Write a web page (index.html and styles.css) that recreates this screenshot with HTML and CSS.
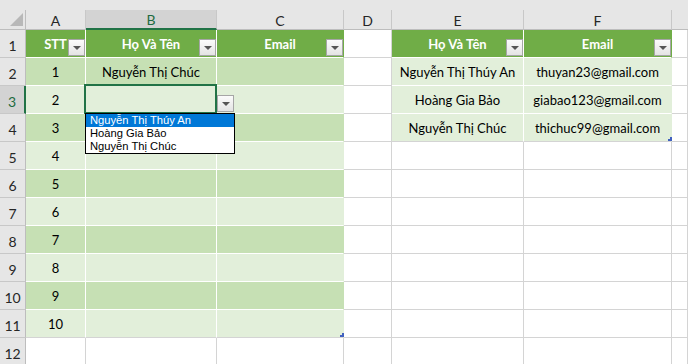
FILE: index.html
```html
<!DOCTYPE html>
<html>
<head>
	<meta charset="UTF-8">
	<title>Danh sách</title>
	<link rel="stylesheet" href="styles.css">
</head>
<body>
	<div class="sheet">
		<div class="strip"></div>

		<div class="ch corner"><span class="select-all"></span></div>
		<div class="ch">A</div>
		<div class="ch active">B</div>
		<div class="ch">C</div>
		<div class="ch">D</div>
		<div class="ch">E</div>
		<div class="ch">F</div>
		<div class="ch last"></div>

		<div class="rh">1</div>
		<div class="cell hd">STT<span class="filter"></span></div>
		<div class="cell hd">Họ Và Tên<span class="filter"></span></div>
		<div class="cell hd end">Email<span class="filter"></span></div>
		<div class="cell"></div>
		<div class="cell hd">Họ Và Tên<span class="filter"></span></div>
		<div class="cell hd end">Email<span class="filter"></span></div>
		<div class="cell"></div>

		<div class="rh">2</div>
		<div class="cell dk">1</div>
		<div class="cell dk">Nguyễn Thị Chúc</div>
		<div class="cell dk end"></div>
		<div class="cell"></div>
		<div class="cell lt">Nguyễn Thị Thúy An</div>
		<div class="cell lt end">thuyan23@gmail.com</div>
		<div class="cell"></div>

		<div class="rh active">3</div>
		<div class="cell lt">2</div>
		<div class="cell lt selected">
			<span class="sel-box"></span>
			<span class="drop-btn"></span>
			<ul class="drop-list">
				<li class="hover">Nguyễn Thị Thúy An</li>
				<li>Hoàng Gia Bảo</li>
				<li>Nguyễn Thị Chúc</li>
			</ul>
		</div>
		<div class="cell lt end"></div>
		<div class="cell"></div>
		<div class="cell lt">Hoàng Gia Bảo</div>
		<div class="cell lt end">giabao123@gmail.com</div>
		<div class="cell"></div>

		<div class="rh">4</div>
		<div class="cell dk">3</div>
		<div class="cell dk"></div>
		<div class="cell dk end"></div>
		<div class="cell"></div>
		<div class="cell lt bottom">Nguyễn Thị Chúc</div>
		<div class="cell lt end bottom">thichuc99@gmail.com<span class="resize"></span></div>
		<div class="cell"></div>

		<div class="rh">5</div>
		<div class="cell lt">4</div>
		<div class="cell lt"></div>
		<div class="cell lt end"></div>
		<div class="cell"></div>
		<div class="cell"></div>
		<div class="cell"></div>
		<div class="cell"></div>

		<div class="rh">6</div>
		<div class="cell dk">5</div>
		<div class="cell dk"></div>
		<div class="cell dk end"></div>
		<div class="cell"></div>
		<div class="cell"></div>
		<div class="cell"></div>
		<div class="cell"></div>

		<div class="rh">7</div>
		<div class="cell lt">6</div>
		<div class="cell lt"></div>
		<div class="cell lt end"></div>
		<div class="cell"></div>
		<div class="cell"></div>
		<div class="cell"></div>
		<div class="cell"></div>

		<div class="rh">8</div>
		<div class="cell dk">7</div>
		<div class="cell dk"></div>
		<div class="cell dk end"></div>
		<div class="cell"></div>
		<div class="cell"></div>
		<div class="cell"></div>
		<div class="cell"></div>

		<div class="rh">9</div>
		<div class="cell lt">8</div>
		<div class="cell lt"></div>
		<div class="cell lt end"></div>
		<div class="cell"></div>
		<div class="cell"></div>
		<div class="cell"></div>
		<div class="cell"></div>

		<div class="rh">10</div>
		<div class="cell dk">9</div>
		<div class="cell dk"></div>
		<div class="cell dk end"></div>
		<div class="cell"></div>
		<div class="cell"></div>
		<div class="cell"></div>
		<div class="cell"></div>

		<div class="rh">11</div>
		<div class="cell lt bottom">10</div>
		<div class="cell lt bottom"></div>
		<div class="cell lt end bottom"><span class="resize"></span></div>
		<div class="cell"></div>
		<div class="cell"></div>
		<div class="cell"></div>
		<div class="cell"></div>

		<div class="rh">12</div>
		<div class="cell"></div>
		<div class="cell"></div>
		<div class="cell"></div>
		<div class="cell"></div>
		<div class="cell"></div>
		<div class="cell"></div>
		<div class="cell"></div>
	</div>
</body>
</html>
```
FILE: styles.css
```css
body {
	margin: 0;
	padding: 0;
	background: #fff;
	font-family: Lato, "Liberation Sans", sans-serif;
	overflow: hidden;
}
.sheet {
	display: grid;
	grid-template-columns: 26px 60px 131px 127px 48px 132px 148px 1fr;
	grid-template-rows: 10px 20px repeat(12, 28px);
	width: 688px;
	font-size: 13px;
	color: #000;
}
.strip {
	grid-column: 1 / -1;
	background: #e6e6e6;
}
.ch {
	display: flex;
	align-items: center;
	justify-content: center;
	background: #e6e6e6;
	border-right: 1px solid #c8c8c8;
	border-bottom: 1px solid #bdbdbd;
	box-sizing: border-box;
	color: #262626;
	font-size: 14px;
	padding-top: 1px;
}
.ch.last {
	border-right: none;
}
.ch.active {
	background: #d3d3d3;
	color: #1e6b41;
	border-bottom: 2px solid #217346;
}
.corner {
	position: relative;
	border-right: 1px solid #bdbdbd;
}
.select-all {
	position: absolute;
	left: 10px;
	top: 3px;
	width: 0;
	height: 0;
	border-left: 13px solid transparent;
	border-bottom: 13px solid #b8b8b8;
}
.rh {
	display: flex;
	align-items: flex-end;
	justify-content: center;
	padding-bottom: 3px;
	background: #e6e6e6;
	border-right: 1px solid #bdbdbd;
	border-bottom: 1px solid #c8c8c8;
	box-sizing: border-box;
	color: #262626;
	font-size: 14px;
}
.rh.active {
	background: #d3d3d3;
	color: #1e6b41;
	border-right: 2px solid #217346;
}
.cell {
	position: relative;
	display: flex;
	align-items: center;
	justify-content: center;
	box-sizing: border-box;
	border-right: 1px solid #d4d4d4;
	border-bottom: 1px solid #d4d4d4;
	white-space: nowrap;
}
.hd {
	background: #70ad47;
	color: #fff;
	font-weight: bold;
	border-right-color: #fff;
	border-bottom-color: #fff;
}
.dk {
	background: #c6e0b4;
	border-right-color: #fff;
	border-bottom-color: #fff;
}
.lt {
	background: #e2efda;
	border-right-color: #fff;
	border-bottom-color: #fff;
}
.hd.end {
	border-right-color: #70ad47;
}
.dk.end {
	border-right-color: #c6e0b4;
}
.lt.end {
	border-right-color: #e2efda;
}
.cell.bottom {
	border-bottom-color: #d4d4d4;
}
.filter,
.drop-btn {
	position: absolute;
	width: 15px;
	height: 15px;
	border: 1px solid #a6a6a6;
	background: linear-gradient(#fbfbfb, #e4e4e4);
}
.filter {
	right: 0;
	bottom: 1px;
}
.filter::after,
.drop-btn::after {
	content: "";
	position: absolute;
	left: 4px;
	top: 6px;
	border-left: 4px solid transparent;
	border-right: 4px solid transparent;
	border-top: 4px solid #555;
}
.sel-box {
	position: absolute;
	left: -2px;
	top: -2px;
	right: -1px;
	bottom: -1px;
	border: 2px solid #217346;
	z-index: 2;
}
.drop-btn {
	left: 131px;
	top: 9px;
	z-index: 3;
}
.drop-list {
	position: absolute;
	left: -1px;
	top: 27px;
	width: 148px;
	margin: 0;
	padding: 0;
	list-style: none;
	background: #fff;
	border: 1px solid #000;
	z-index: 4;
	font-family: "Liberation Sans", sans-serif;
	font-size: 11.2px;
}
.drop-list li {
	height: 13px;
	line-height: 13px;
	padding-left: 4px;
	color: #000;
}
.drop-list li.hover {
	background: #0078d7;
	color: #fff;
}
.resize {
	position: absolute;
	right: -1px;
	bottom: 0;
	width: 4px;
	height: 4px;
	background: #4161bf;
	clip-path: polygon(100% 0, 100% 100%, 0 100%, 0 50%, 50% 50%, 50% 0);
}
```
